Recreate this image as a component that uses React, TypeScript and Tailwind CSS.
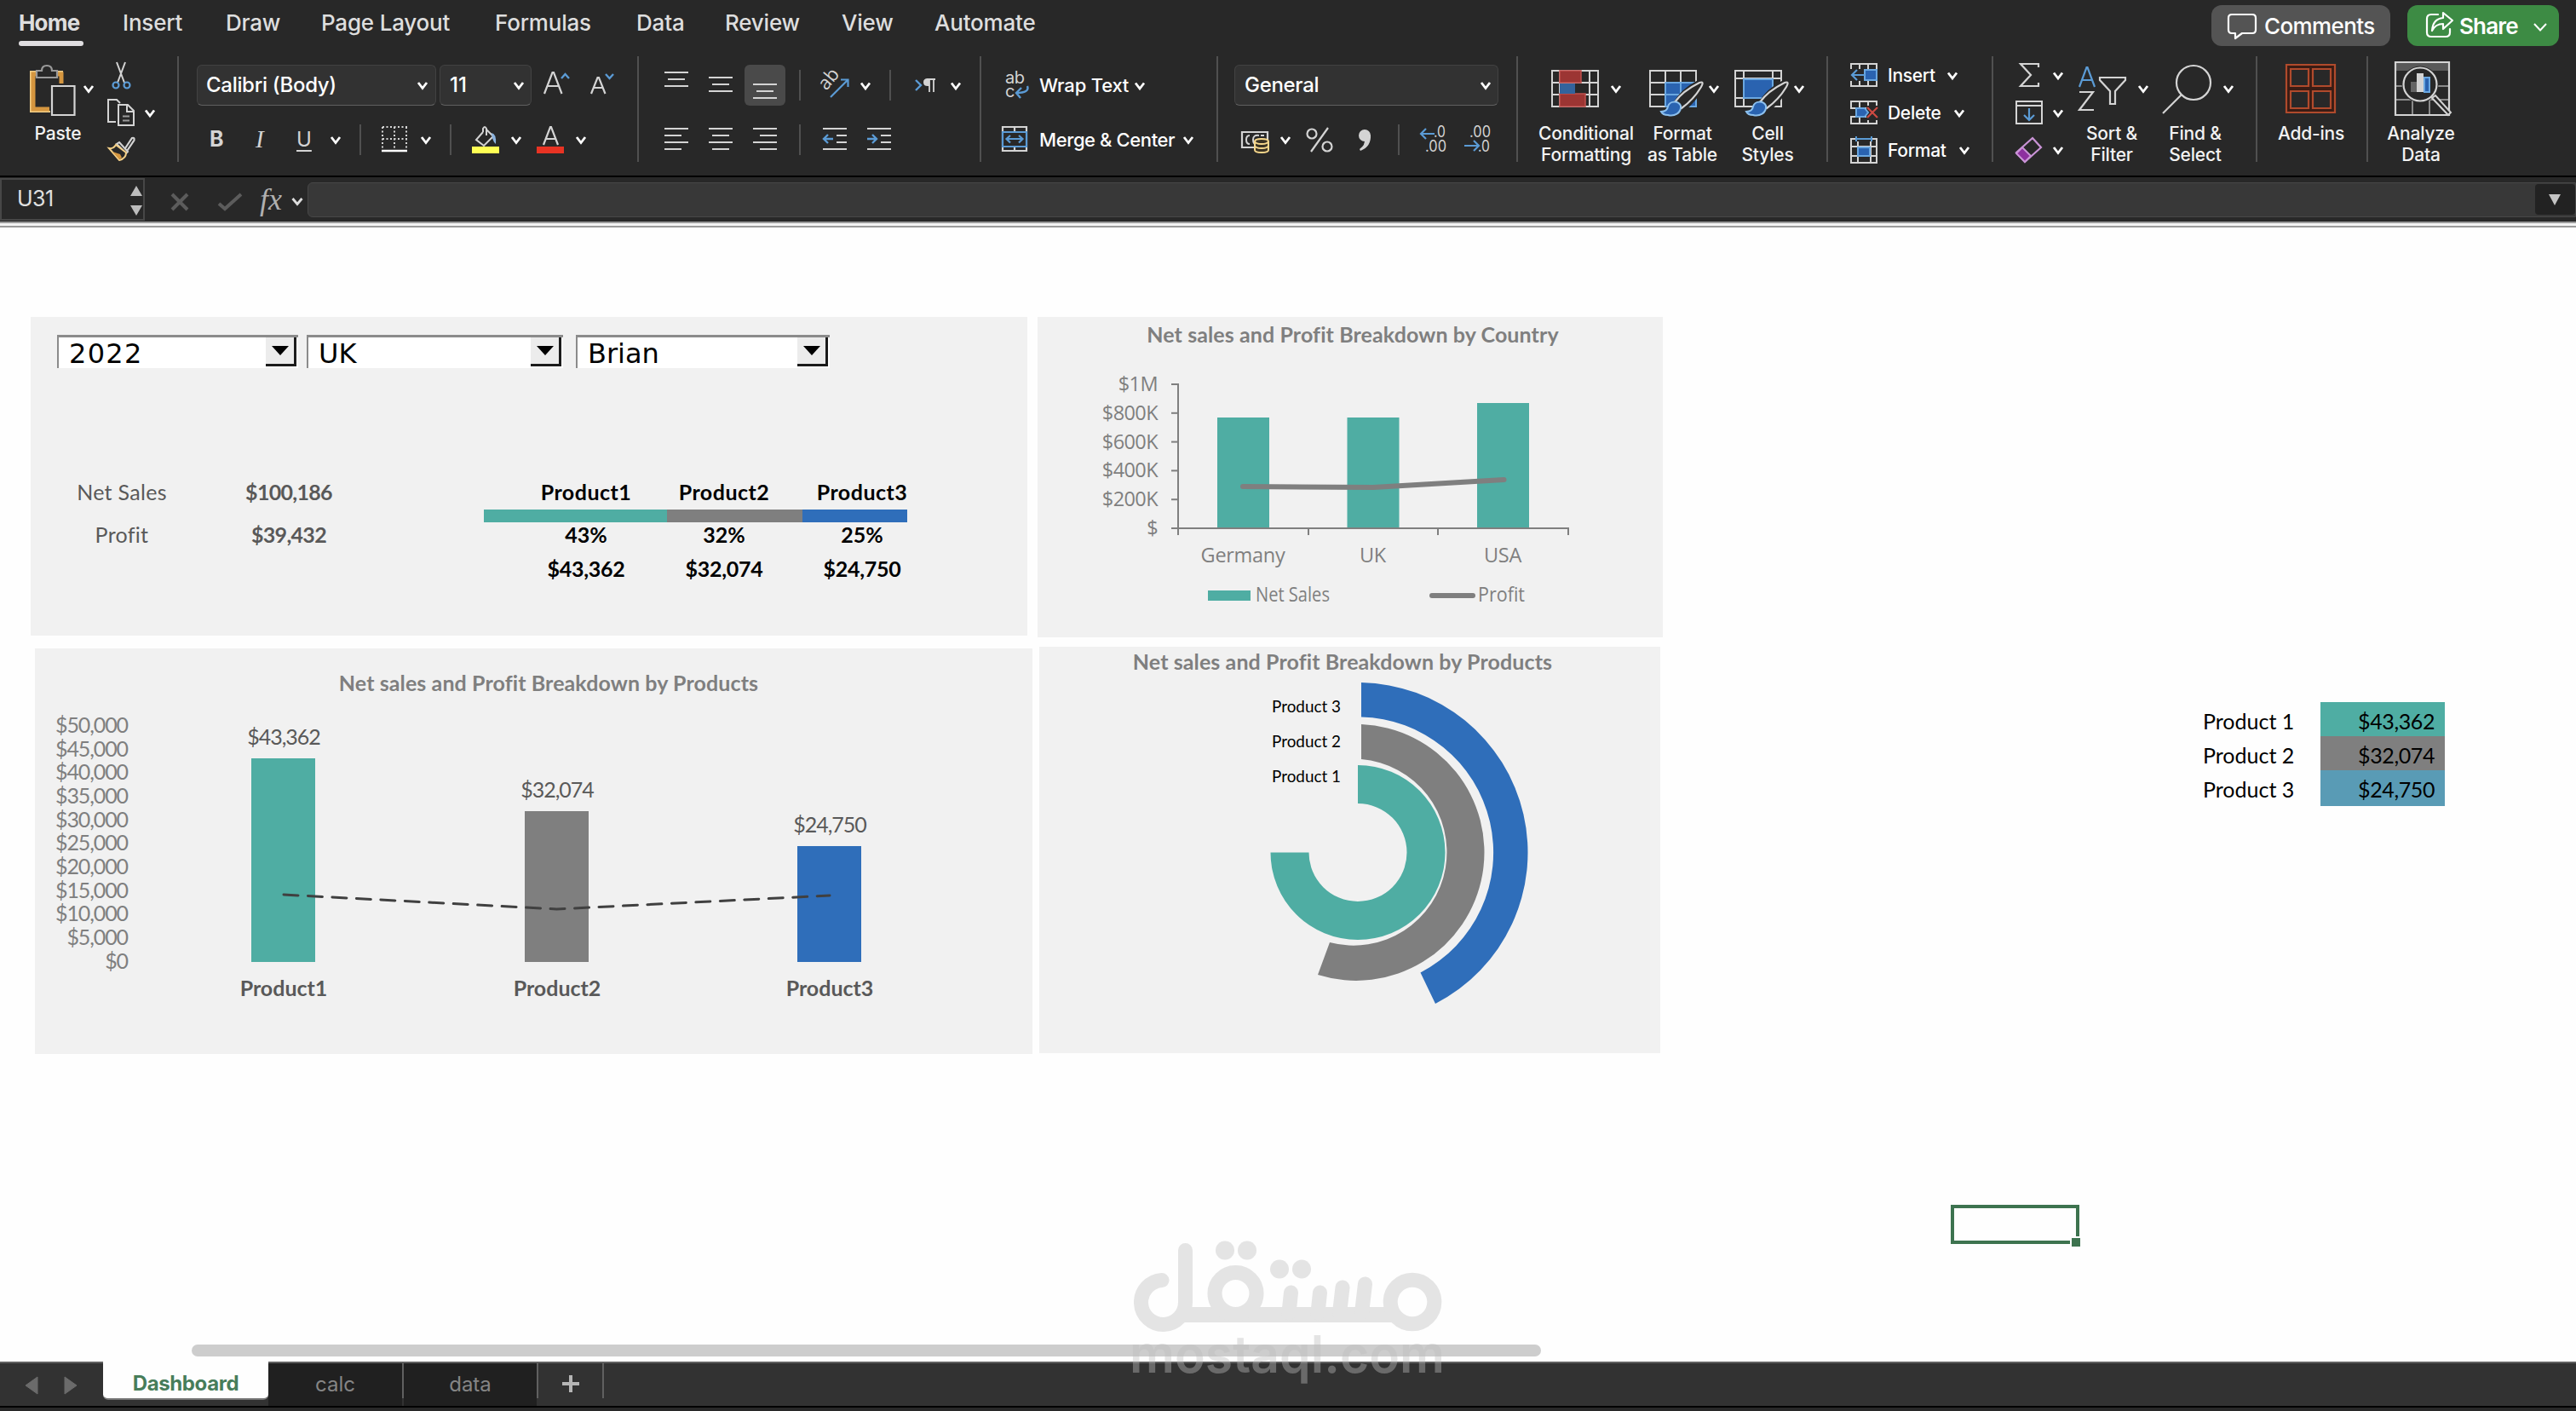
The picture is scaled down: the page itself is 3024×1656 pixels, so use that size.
import React from 'react';

const GREY = '#d4d4d4';
const BLUE = '#5b9bd5';
const TEAL = '#4fada3';
const MID = '#7f7f7f';
const ROYAL = '#2f6eba';

const GOTHIC = 'Lato, sans-serif';
const SEGOE = '"Open Sans", sans-serif';

type ArtProps = {
  x: number;
  w: number;
  y?: number;
  h?: number;
  children?: React.ReactNode;
};

// Every drawing in the ribbon shares one coordinate space, (x, y) is its top left corner.
function Art({ x, w, y = 76, h = 48, children }: ArtProps) {
  return (
    <svg width={w} height={h} viewBox={`${x} ${y} ${w} ${h}`} fill="none" className="shrink-0 overflow-visible">
      {children}
    </svg>
  );
}

function Chev({ cx, cy }: { cx: number; cy: number }) {
  return <path d={`M${cx - 5} ${cy - 3.5}l5 6.5 5-6.5`} stroke="#fff" strokeWidth="2.8" />;
}

function Rule({ x, y = 82 }: { x: number; y?: number }) {
  return <path d={`M${x} ${y}v36`} stroke="#505050" strokeWidth="2" />;
}

function Bars({ rows, stroke = GREY }: { rows: [number, number, number][]; stroke?: string }) {
  return <path d={rows.map(([x, y, w]) => `M${x} ${y}h${w}`).join('')} stroke={stroke} strokeWidth="2.2" />;
}

function Brush({ x }: { x: number }) {
  return (
    <g>
      <path d={`M${x + 18} 121q8-14 27-24q6-2 2 5q-9 15-21 25z`} fill="#282828" stroke="#282828" strokeWidth="7" />
      <path d={`M${x + 16} 120q9-13 29-23q6-2 2 5q-9 15-23 25z`} fill="#282828" stroke={GREY} strokeWidth="2.2" />
      <path
        d={`M${x} 131q7 0 8-6c2-7 12-7 15-1 1 9-8 13-15 11q-6 0-8-4z`}
        fill="#2a63b0"
        stroke="#8cc0ee"
        strokeWidth="2"
      />
    </g>
  );
}

function Group({ className, children }: { className: string; children: React.ReactNode }) {
  return <div className={`h-[124px] shrink-0 border-[#505050] ${className}`}>{children}</div>;
}

function BigButton({ className, lines, children }: { className: string; lines: string[]; children: React.ReactNode }) {
  return (
    <div className={`flex shrink-0 flex-col ${className}`}>
      {children}
      <div className="text-center text-[21px] leading-[25px] font-medium tracking-[-0.2px] whitespace-nowrap text-[#f2f2f2]">
        {lines.map((line) => (
          <div key={line}>{line}</div>
        ))}
      </div>
    </div>
  );
}

const tabs = [
  { label: 'Home', className: 'w-[122px] font-bold' },
  { label: 'Insert', className: 'w-[121px] font-medium' },
  { label: 'Draw', className: 'w-[112px] font-medium' },
  { label: 'Page Layout', className: 'w-[204px] font-medium' },
  { label: 'Formulas', className: 'w-[166px] font-medium' },
  { label: 'Data', className: 'w-[104px] font-medium' },
  { label: 'Review', className: 'w-[137px] font-medium' },
  { label: 'View', className: 'w-[109px] font-medium' },
  { label: 'Automate', className: 'w-[140px] font-medium' },
];

function TabBar() {
  return (
    <div className="flex h-[66px] items-start">
      <div className="flex pt-[9px] pl-[22px]">
        {tabs.map((tab, i) => (
          <div
            key={tab.label}
            className={`text-[26px] leading-[36px] tracking-[-0.2px] whitespace-nowrap text-[#dedede] ${tab.className}`}
          >
            {i === 0 ? <span className="tracking-[-0.8px]">{tab.label}</span> : tab.label}
            {i === 0 && <div className="mt-[3px] h-[6px] w-[76px] rounded-full bg-[#e0dee1]" />}
          </div>
        ))}
      </div>
      <div className="mt-[6px] ml-auto flex h-[48px] w-[210px] items-center rounded-xl bg-[#545454]">
        <Art x={2596} y={6} w={62}>
          <path
            d="M2620 17h24q4 0 4 4v14q0 4-4 4h-12l-8 6v-6h-4q-4 0-4-4v-14q0-4 4-4z"
            stroke="#fff"
            strokeWidth="2.2"
            strokeLinejoin="round"
          />
        </Art>
        <span className="text-[26px] font-medium tracking-[-0.6px] text-white">Comments</span>
      </div>
      <div className="mt-[6px] mr-[20px] ml-[20px] flex h-[48px] w-[178px] items-center rounded-xl bg-[#3d8b44]">
        <Art x={2826} y={6} w={61}>
          <path
            d="M2862 17h-8q-5 0-5 5v16q0 5 5 5h17q5 0 5-5v-4"
            stroke="#fff"
            strokeWidth="2.2"
            strokeLinecap="round"
          />
          <path
            d="M2868 15l11 9-11 10v-6q-9 0-13 8 1-14 13-15z"
            stroke="#fff"
            strokeWidth="2.2"
            strokeLinejoin="round"
          />
        </Art>
        <span className="w-[82px] text-[26px] font-semibold tracking-[-0.8px] text-white">Share</span>
        <Art x={2969} y={6} w={30}>
          <path d="M2975 28l7 7.500 7-7.500" stroke="#fff" strokeWidth="2" />
        </Art>
      </div>
    </div>
  );
}

function ClipboardGroup() {
  return (
    <Group className="flex w-[210px] border-r-2">
      <BigButton className="w-[118px] pl-[18px]" lines={['Paste']}>
        <Art x={18} y={66} w={100} h={78}>
          <path d="M45 84h-9v47h23M64 84h9v13" stroke="#f3cf87" strokeWidth="2" />
          <path d="M43 87h-4v41h19M66 87h6v11" stroke="#d5963f" strokeWidth="5" />
          <path d="M43 91v-8h6q0-6 6-6t6 6h6v8z" fill="#282828" stroke="#9a9a9a" strokeWidth="2.2" />
          <path d="M61 101h26.500v34H61z" fill="#282828" stroke={GREY} strokeWidth="2.200" />
          <Chev cx={104} cy={104.500} />
        </Art>
      </BigButton>
      <Art x={118} y={66} w={86} h={128}>
        <path d="M137 73l9 24M147 73l-9 24" stroke={GREY} strokeWidth="2" />
        <circle cx="136" cy="100" r="3.500" stroke={BLUE} strokeWidth="2.200" />
        <circle cx="149" cy="100" r="3.500" stroke={BLUE} strokeWidth="2.200" />
        <path d="M136 143h-9v-26h10l4 4" stroke={GREY} strokeWidth="2" />
        <path d="M139 123h11l7 7v17h-18zM149 123v8h8" stroke={GREY} strokeWidth="2" />
        <path d="M144 136.500h8M144 141.500h8" stroke="#999" strokeWidth="1.800" />
        <Chev cx={176} cy={133} />
        <path d="M147 174l8-12q3-1 2.500 2.500l-8 12" stroke={GREY} strokeWidth="2.200" />
        <path d="M140 167l10 11-2 2-11-11z" stroke={GREY} strokeWidth="2" />
        <path d="M136 170q-3 5-8 4l12 14q8-2 8-9z" fill="#282828" stroke="#f3cf87" strokeWidth="2" />
        <path d="M132 178l9 3 2 4-3 2z" fill="#d5963f" />
      </Art>
    </Group>
  );
}

const selectBox =
  'flex h-[48px] shrink-0 items-center rounded-md border border-[#424242] border-b-[#606060] bg-[#323232] text-[24px] font-medium text-white';

function FontGroup() {
  return (
    <Group className="w-[540px] border-r-2 pt-[10px] pl-[21px]">
      <div className="flex h-[48px] items-center">
        <div className={`${selectBox} w-[281px] pl-[10px] tracking-[-0.3px]`}>
          <span className="w-[242px] whitespace-nowrap">Calibri (Body)</span>
          <Art x={485} w={24} y={88} h={24}>
            <Chev cx={497} cy={100.500} />
          </Art>
        </div>
        <div className={`${selectBox} ml-[4px] w-[108px] pl-[11px]`}>
          <span className="w-[69px]">11</span>
          <Art x={597} w={24} y={88} h={24}>
            <Chev cx={609} cy={100.500} />
          </Art>
        </div>
        <Art x={624} w={110}>
          <path d="M639 110l9.500-25h1.500l9.500 25M643 101h13" stroke={GREY} strokeWidth="2.200" />
          <path d="M659 92l4.500-5 4.500 5" stroke={BLUE} strokeWidth="2.400" />
          <path d="M694 110l7.500-19h1.500l7.500 19M697 103h11" stroke={GREY} strokeWidth="2.200" />
          <path d="M711 87l4.500 5 4.500-5" stroke={BLUE} strokeWidth="2.400" />
        </Art>
      </div>
      <div className="mt-[22px] flex h-[36px] items-center">
        <span className="w-[49px] pl-[15px] text-[25px] font-bold text-[#d4d4d4]">B</span>
        <span className="w-[50px] pl-[20px] font-['Liberation_Serif',serif] text-[29px] text-[#d4d4d4] italic">I</span>
        <span className="w-[45px] pl-[18px] text-[24px] text-[#d4d4d4] underline decoration-2 underline-offset-4">U</span>
        <Art x={375} y={146} w={352} h={36}>
          <Chev cx={394} cy={164.500} />
          <Rule x={423} y={146} />
          <path d="M449 149h29M449 149v25M477 149v25M463 149v25M449 163h29" stroke={GREY} strokeWidth="2" strokeDasharray="2 2.500" />
          <path d="M448 177h30" stroke="#fff" strokeWidth="2.500" />
          <Chev cx={500} cy={164.500} />
          <Rule x={529} y={146} />
          <path d="M567 155l-8 9 9 7 11-11-8-8M567 155v-4q2-4 4 0v8" stroke={GREY} strokeWidth="2" />
          <path d="M577 156q6 1 5 13-4-3-5-13z" fill="#8cb4e0" />
          <path d="M554 172h32v8h-32z" fill="#ffff54" />
          <Chev cx={606} cy={164.500} />
          <path d="M638 170l8-21h1l8 21M641 163h11" stroke={GREY} strokeWidth="2.200" />
          <path d="M630 172h32v8h-32z" fill="#e83323" />
          <Chev cx={682} cy={164.500} />
        </Art>
      </div>
    </Group>
  );
}

function AlignGroup() {
  return (
    <Group className="w-[402px] border-r-2 pt-[10px] pl-[20px]">
      <div className="flex h-[48px] items-center">
        <Art x={770} w={104}>
          <Bars rows={[[780, 85, 28], [784, 93, 20], [780, 101, 28], [832, 91, 28], [836, 99, 20], [832, 107, 28]]} />
        </Art>
        <div className="h-[48px] w-[48px] rounded-md bg-[#4a4a4a]">
          <Art x={874} w={48}>
            <Bars rows={[[884, 99, 28], [888, 107, 20], [884, 115, 28]]} />
          </Art>
        </div>
        <Art x={922} w={220}>
          <Rule x={939} />
          <text
            x="970"
            y="107"
            transform="rotate(-50 970 107)"
            fontFamily="Open Sans, sans-serif"
            fontSize="22"
            fill={GREY}
          >
            ab
          </text>
          <path d="M975 114l20-20M987 93.500h8.500v8.500" stroke={BLUE} strokeWidth="2.200" />
          <Chev cx={1016} cy={101} />
          <Rule x={1045} />
          <path d="M1075 94l6 6-6 6" stroke={BLUE} strokeWidth="2.400" />
          <path d="M1091 93v15M1096 93v15M1088 93h10" stroke={GREY} strokeWidth="1.800" />
          <path d="M1091 92h-2q-5 0-5 4.500t5 4.500h2z" fill={GREY} />
          <Chev cx={1122} cy={101} />
        </Art>
      </div>
      <div className="mt-[22px] flex h-[36px] items-center">
        <Art x={770} y={146} w={300} h={36}>
          <Bars rows={[[780, 151, 28], [780, 159, 20], [780, 167, 28], [780, 175, 20]]} />
          <Bars rows={[[832, 151, 28], [836, 159, 20], [832, 167, 28], [836, 175, 20]]} />
          <Bars rows={[[884, 151, 28], [892, 159, 20], [884, 167, 28], [892, 175, 20]]} />
          <Rule x={939} y={146} />
          <Bars rows={[[966, 151, 28], [982, 159, 12], [982, 167, 12], [966, 175, 28]]} />
          <path d="M978 163h-11M972 158l-5 5 5 5" stroke={BLUE} strokeWidth="2.400" />
          <Bars rows={[[1018, 151, 28], [1034, 159, 12], [1034, 167, 12], [1018, 175, 28]]} />
          <path d="M1018 163h11M1024 158l5 5-5 5" stroke={BLUE} strokeWidth="2.400" />
        </Art>
      </div>
    </Group>
  );
}

function WrapGroup() {
  return (
    <Group className="w-[278px] border-r-2 pt-[10px] pl-[18px] text-[22px] font-medium tracking-[-0.4px] whitespace-nowrap text-white">
      <div className="flex h-[48px] items-center">
        <Art x={1170} w={50}>
          <g fill={GREY} fontFamily="Inter, sans-serif" fontSize="20" fontWeight="400">
            <text x="1180" y="98">ab</text>
            <text x="1180" y="114">c</text>
          </g>
          <path d="M1206 101q3 8-13 8M1199 103l-6 6 5 6" stroke={BLUE} strokeWidth="2.400" />
        </Art>
        <span className="w-[106px] tracking-[-0.2px]">Wrap Text</span>
        <Art x={1326} w={24}>
          <Chev cx={1338} cy={101} />
        </Art>
      </div>
      <div className="mt-[22px] flex h-[36px] items-center">
        <Art x={1170} y={146} w={50} h={36}>
          <path d="M1177 149h28v28h-28zM1191 149v6M1191 171v6" stroke={GREY} strokeWidth="2.200" />
          <path d="M1177 155h28v17h-28z" fill="#282828" stroke={BLUE} strokeWidth="2.200" />
          <path d="M1182 163h18M1186 159l-4.500 4 4.500 4.500M1196 159l4.500 4-4.500 4.500" stroke={BLUE} strokeWidth="2.200" />
        </Art>
        <span className="w-[163px]">Merge &amp; Center</span>
        <Art x={1383} y={146} w={24} h={36}>
          <Chev cx={1395} cy={164.500} />
        </Art>
      </div>
    </Group>
  );
}

function NumberGroup() {
  return (
    <Group className="w-[352px] border-r-2 pt-[10px] pl-[19px]">
      <div className={`${selectBox} w-[310px] pl-[11px] tracking-[-0.3px]`}>
        <span className="w-[271px]">General</span>
        <Art x={1732} w={24} y={88} h={24}>
          <Chev cx={1744} cy={100.500} />
        </Art>
      </div>
      <div className="mt-[22px] flex h-[36px] items-center">
        <Art x={1449} y={146} w={310} h={36}>
          <path d="M1458 155h30v18h-30z" stroke={GREY} strokeWidth="2.200" />
          <path d="M1467 159q-4 0-4 5t4 5M1478 159q-7-1-7 5t5 5M1480 159h4" stroke={GREY} strokeWidth="2" />
          <path d="M1473 166q0-3 8-3t8 3v10q0 3-8 3t-8-3z" fill="#3a3324" stroke="#f7d88c" strokeWidth="2" />
          <path d="M1473 166q1 3 8 3t8-3M1473 171q1 3 8 3t8-3" stroke="#f7d88c" strokeWidth="2" />
          <Chev cx={1509} cy={164.500} />
          <circle cx="1540" cy="157" r="5.500" stroke={GREY} strokeWidth="2.200" />
          <circle cx="1558" cy="172" r="5.500" stroke={GREY} strokeWidth="2.200" />
          <path d="M1559 150l-20 28" stroke={GREY} strokeWidth="2.200" />
          <circle cx="1602" cy="159" r="7" fill={GREY} />
          <path d="M1609 158q1 14-12 19l-1-2q7-5 6-12z" fill={GREY} />
          <Rule x={1642} y={146} />
          <g fill={GREY} fontFamily="Inter, sans-serif" fontSize="18">
            <text x="1683" y="161" textLength="14" lengthAdjust="spacingAndGlyphs">.0</text>
            <text x="1673" y="178" textLength="25" lengthAdjust="spacingAndGlyphs">.00</text>
            <text x="1725" y="161" textLength="25" lengthAdjust="spacingAndGlyphs">.00</text>
            <text x="1735" y="178" textLength="14" lengthAdjust="spacingAndGlyphs">.0</text>
          </g>
          <path d="M1684 157h-16M1674 151l-6 6 6 6" stroke={BLUE} strokeWidth="2.200" />
          <path d="M1719 171h16M1730 165l6 6-6 6" stroke={BLUE} strokeWidth="2.200" />
        </Art>
      </div>
    </Group>
  );
}

function StylesGroup() {
  return (
    <Group className="flex w-[364px] border-r-2 pl-[19px]">
      <BigButton className="w-[122px]" lines={['Conditional', 'Formatting']}>
        <Art x={1801} y={66} w={122} h={78}>
          <path d="M1822 83h54v42h-54zM1822 97h54M1822 111h54M1831 83v42M1866 83v42" stroke={GREY} strokeWidth="2" />
          <path d="M1831 83h25v14h-25zM1831 110h30v15h-30z" fill="#9c3533" stroke="#c0504d" strokeWidth="1.500" />
          <path d="M1831 98h18v12h-18z" fill="#33639c" />
          <Chev cx={1897} cy={104.500} />
        </Art>
      </BigButton>
      <BigButton className="w-[104px]" lines={['Format', 'as Table']}>
        <Art x={1923} y={66} w={104} h={78}>
          <path d="M1955 97h36v28h-36z" fill="#2a63b0" />
          <path d="M1937 83h54v42h-54zM1937 97h54M1937 111h54M1955 83v42M1973 83v42" stroke={GREY} strokeWidth="2" />
          <path d="M1955 97h36M1955 111h36M1955 97v28M1973 97v28M1955 125h36v-14" stroke="#6aa7e0" strokeWidth="2" />
          <Brush x={1950} />
          <Chev cx={2012} cy={104.500} />
        </Art>
      </BigButton>
      <BigButton className="-ml-[2px] w-[100px]" lines={['Cell', 'Styles']}>
        <Art x={2025} y={66} w={100} h={78}>
          <path d="M2037 83h54v42h-54zM2047 83v42M2081 83v42M2037 92h54M2037 115h54" stroke={GREY} strokeWidth="2" />
          <path d="M2047 93h34v22h-34z" fill="#2a63b0" stroke="#6aa7e0" strokeWidth="2" />
          <Brush x={2050} />
          <Chev cx={2112} cy={104.500} />
        </Art>
      </BigButton>
    </Group>
  );
}

function CellsGroup() {
  const label = 'pt-[2px] text-[21px] font-medium tracking-[-0.3px] text-white';
  return (
    <Group className="w-[194px] border-r-2 pl-[14px]">
      <div className="flex h-[44px] items-center">
        <Art x={2160} y={66} w={56} h={44}>
          <path d="M2173 75h30v26h-30zM2173 83h30M2173 93h30M2183 75v26M2193 75v26" stroke={GREY} strokeWidth="2" />
          <path d="M2172 81h18v14h-18z" fill="#282828" />
          <path d="M2189 82h14v12h-14z" fill="#2a63b0" stroke="#6aa7e0" strokeWidth="2" />
          <path d="M2189 88h-15M2180 82l-6 6 6 6" stroke={BLUE} strokeWidth="2.200" />
        </Art>
        <span className={`${label} w-[64px]`}>Insert</span>
        <Art x={2280} y={66} w={24} h={44}>
          <Chev cx={2292} cy={89} />
        </Art>
      </div>
      <div className="flex h-[44px] items-center">
        <Art x={2160} y={110} w={56} h={44}>
          <path d="M2173 119h30v26h-30zM2173 127h30M2173 137h30M2183 119v26M2193 119v26" stroke={GREY} strokeWidth="2" />
          <path d="M2191 124h14v17h-14zM2171 128h8v8h-8z" fill="#282828" />
          <path d="M2179 127h10l4 5-4 5h-10z" fill="#2a63b0" stroke="#6aa7e0" strokeWidth="2" />
          <path d="M2192 126l12 12M2204 126l-12 12" stroke="#cf4a43" strokeWidth="2.200" />
        </Art>
        <span className={`${label} w-[72px]`}>Delete</span>
        <Art x={2288} y={110} w={24} h={44}>
          <Chev cx={2300} cy={133} />
        </Art>
      </div>
      <div className="flex h-[44px] items-center">
        <Art x={2160} y={154} w={56} h={44}>
          <path d="M2178 163h-5v28h30v-28h-5M2173 172h30M2173 183h30M2181 166v25M2196 166v25" stroke={GREY} strokeWidth="2" />
          <path d="M2181 173h14v10h-14z" fill="#2a63b0" stroke="#6aa7e0" strokeWidth="2" />
          <path d="M2179 163h18M2179 160v6M2197 160v6" stroke={BLUE} strokeWidth="2" />
        </Art>
        <span className={`${label} w-[78px]`}>Format</span>
        <Art x={2294} y={154} w={24} h={44}>
          <Chev cx={2306} cy={176.500} />
        </Art>
      </div>
    </Group>
  );
}

function EditGroup() {
  return (
    <Group className="flex w-[310px] border-r-2 pl-[14px]">
      <Art x={2354} y={66} w={74} h={128}>
        <path d="M2393 79v-4h-21l12 13-12 13h21v-4" stroke={GREY} strokeWidth="2.200" />
        <Chev cx={2416} cy={89} />
        <path d="M2367 119h30v26h-30zM2367 124h30" stroke={GREY} strokeWidth="2" />
        <path d="M2382 127v14M2376 135l6 6 6-6" stroke={BLUE} strokeWidth="2.200" />
        <Chev cx={2416} cy={133} />
        <path d="M2386 162l10 11-19 17-10-11z" stroke="#c993d6" strokeWidth="2.200" />
        <path d="M2374 173l10 10-7 7-10-10z" fill="#8d2f9f" stroke="#c993d6" strokeWidth="2" />
        <Chev cx={2416} cy={176.500} />
      </Art>
      <BigButton className="w-[102px]" lines={['Sort &', 'Filter']}>
        <Art x={2428} y={66} w={102} h={78}>
          <path d="M2441 102l8.500-23h1l8.500 23M2444 94h12" stroke={BLUE} strokeWidth="2.200" />
          <path d="M2441 108h16l-16 21h17" stroke={GREY} strokeWidth="2.200" />
          <path d="M2465 91h30v3l-12 13v15h-6v-15l-12-13z" stroke={GREY} strokeWidth="2.200" />
          <Chev cx={2516} cy={104.500} />
        </Art>
      </BigButton>
      <BigButton className="w-[94px]" lines={['Find &', 'Select']}>
        <Art x={2530} y={66} w={94} h={78}>
          <circle cx="2575" cy="97" r="20" stroke={GREY} strokeWidth="2.200" />
          <path d="M2561 111l-22 22" stroke={GREY} strokeWidth="2.200" />
          <Chev cx={2616} cy={104.500} />
        </Art>
      </BigButton>
    </Group>
  );
}

function AddinsGroup() {
  return (
    <>
      <Group className="flex w-[130px] border-r-2 pl-[10px]">
        <BigButton className="w-[106px]" lines={['Add-ins']}>
          <Art x={2660} y={66} w={106} h={78}>
            <path d="M2684 76h57v56h-57z" fill="#3a1c14" stroke="#b04a2c" strokeWidth="2.200" />
            <path
              d="M2689 81h21v20h-21zM2715 81h21v20h-21zM2689 107h21v20h-21zM2715 107h21v20h-21z"
              fill="#282828"
              stroke="#b04a2c"
              strokeWidth="2.200"
            />
          </Art>
        </BigButton>
      </Group>
      <Group className="flex w-[130px]">
        <BigButton className="w-[124px]" lines={['Analyze', 'Data']}>
          <Art x={2780} y={66} w={124} h={78}>
            <path d="M2812 73h63v10h-63z" fill="#595959" />
            <path d="M2812 101h63M2812 117h63M2832 117v18M2852 117v18" stroke="#8a8a8a" strokeWidth="2" />
            <path d="M2812 73h63v62h-63z" stroke={GREY} strokeWidth="2.200" />
            <circle cx="2841" cy="99" r="21.500" fill="#282828" />
            <circle cx="2841" cy="99" r="19.500" fill="#282828" stroke={GREY} strokeWidth="2.200" />
            <path d="M2855 115l19 20 3-3-18-20z" fill="#282828" stroke={GREY} strokeWidth="2" />
            <path d="M2830 96h7v12h-7z" fill="#666" />
            <path d="M2837 86h8v22h-8z" fill={GREY} />
            <path d="M2846 91h6v17h-6z" fill="#2a63b0" stroke="#6aa7e0" strokeWidth="2" />
          </Art>
        </BigButton>
      </Group>
    </>
  );
}

function FormulaBar() {
  return (
    <div className="flex h-[52px] items-center bg-[#282828]">
      <div className="flex h-[50px] w-[170px] shrink-0 items-center border-2 border-[#474747] pl-[18px]">
        <span className="w-[124px] text-[25px] tracking-[-0.5px] text-[#e0e0e0]">U31</span>
        <Art x={144} y={210} w={24} h={46}>
          <path d="M160 217l7 12h-14zM160 252l-7-12h14z" fill="#bdbdbd" />
        </Art>
      </div>
      <Art x={170} y={208} w={125} h={52}>
        <path d="M202 228l18 18M220 228l-18 18" stroke="#5c5c5c" strokeWidth="4" />
        <path d="M257 239l7 6 19-17" stroke="#5c5c5c" strokeWidth="4" />
      </Art>
      <span className="w-[41px] pl-[10px] font-['Liberation_Serif',serif] text-[36px] leading-[44px] text-[#b0b0b0] italic">fx</span>
      <Art x={336} y={208} w={25} h={52}>
        <path d="M343.500 233l5.500 6.500 5.500-6.500" stroke="#dedede" strokeWidth="2.800" />
      </Art>
      <div className="flex h-[41px] grow items-center justify-end rounded-l-md border border-[#474747] bg-[#383838]">
        <div className="flex h-[36px] w-[47px] items-center justify-center rounded-sm bg-[#222] pr-[2px]">
          <svg width="14" height="13" viewBox="0 0 14 13">
            <path d="M0 0h14L7 13z" fill="#c4c4c4" />
          </svg>
        </div>
      </div>
    </div>
  );
}

function ComboBox({ className, value }: { className: string; value: string }) {
  return (
    <div
      className={`flex h-[39px] justify-between border-t-3 border-l-2 border-t-[#8b8b8b] border-l-[#8b8b8b] bg-white font-['DejaVu_Sans',sans-serif] text-[32px] leading-[39px] text-black ${className}`}
    >
      <span className="pl-[12px]">{value}</span>
      <div className="mr-[2px] flex h-[34px] w-[36px] items-center justify-center border-r-3 border-b-3 border-[#1c1c1c] bg-[#ececec]">
        <svg width="20" height="11" viewBox="0 0 20 11">
          <path d="M0 0h20L10 11z" fill="#000" />
        </svg>
      </div>
    </div>
  );
}

const products = [
  { name: 'Product1', share: '43%', amount: '$43,362', bar: 'w-[215px] bg-[#4fada3]' },
  { name: 'Product2', share: '32%', amount: '$32,074', bar: 'w-[159px] bg-[#7f7f7f]' },
  { name: 'Product3', share: '25%', amount: '$24,750', bar: 'w-[123px] bg-[#2f6eba]' },
];

function SummaryPanel() {
  return (
    <div className="h-[374px] w-[1170px] bg-[#f1f1f1] font-[Lato,sans-serif] text-[25px] leading-[30px]">
      <div className="flex pt-[21px] pl-[31px]">
        <ComboBox className="w-[283px] tracking-[1.300px]" value="2022" />
        <ComboBox className="ml-[10px] w-[301px]" value="UK" />
        <ComboBox className="ml-[15px] w-[298px]" value="Brian" />
      </div>
      <div className="mt-[130px] flex text-center">
        <div className="ml-[37px] w-[140px] tracking-[0.3px] text-[#595959]">
          <div>Net Sales</div>
          <div className="mt-[20px]">Profit</div>
        </div>
        <div className="ml-[56px] w-[140px] font-bold tracking-[-0.7px] text-[#595959]">
          <div>$100,186</div>
          <div className="mt-[20px]">$39,432</div>
        </div>
        <div className="ml-[159px] w-[530px] font-bold text-black">
          <div className="flex pl-[39px] tracking-[0.5px]">
            {products.map((p) => (
              <div key={p.name} className="w-[162px]">{p.name}</div>
            ))}
          </div>
          <div className="mt-[6px] flex h-[15px]">
            {products.map((p) => (
              <div key={p.name} className={p.bar} />
            ))}
          </div>
          <div className="-mt-px flex pl-[39px]">
            {products.map((p) => (
              <div key={p.name} className="w-[162px]">{p.share}</div>
            ))}
          </div>
          <div className="mt-[10px] flex pl-[39px] tracking-[-0.3px]">
            {products.map((p) => (
              <div key={p.name} className="w-[162px]">{p.amount}</div>
            ))}
          </div>
        </div>
      </div>
    </div>
  );
}

function CountryPanel() {
  const scale = ['$1M', '$800K', '$600K', '$400K', '$200K', '$'];
  const bars = [
    { name: 'Germany', x: 1429, top: 490 },
    { name: 'UK', x: 1581.500, top: 490 },
    { name: 'USA', x: 1734, top: 473 },
  ];
  return (
    <div className="h-[376px] w-[734px] bg-[#f1f1f1]">
      <h2 className="h-[40px] pl-[6px] text-center font-[Lato,sans-serif] text-[25px] leading-[40px] font-bold tracking-[0.1px] text-[#7f7f7f]">
        Net sales and Profit Breakdown by Country
      </h2>
      <svg width="734" height="336" viewBox="1218 412 734 336" fontFamily={SEGOE} fontSize="23.500" fill={MID}>
        {scale.map((label, i) => (
          <g key={label}>
            <text x="1359" y={459 + i * 33.800} textAnchor="end" letterSpacing="-0.6">{label}</text>
            <path d={`M1375 ${451 + i * 33.800}h8`} stroke={MID} strokeWidth="2" />
          </g>
        ))}
        {bars.map((b) => (
          <g key={b.name}>
            <rect x={b.x} y={b.top} width="61" height={620 - b.top} fill={TEAL} />
            <text x={b.x + 30} y="660" textAnchor="middle" letterSpacing="-0.300">{b.name}</text>
          </g>
        ))}
        <path d="M1383 450v178M1383 620h459M1536 620v8M1688 620v8M1841 620v8" fill="none" stroke={MID} strokeWidth="2" />
        <path d="M1459 571l153 1 153.500-9" fill="none" stroke={MID} strokeWidth="6" strokeLinecap="round" strokeLinejoin="round" />
        <rect x="1418" y="693" width="50" height="12" fill={TEAL} />
        <text x="1474" y="706" textLength="87" lengthAdjust="spacingAndGlyphs">Net Sales</text>
        <path d="M1681 699h48" stroke={MID} strokeWidth="6" strokeLinecap="round" />
        <text x="1735" y="706" textLength="55" lengthAdjust="spacingAndGlyphs">Profit</text>
      </svg>
    </div>
  );
}

function ProductPanel() {
  const bars = [
    { name: 'Product1', value: '$43,362', x: 295, top: 890, fill: TEAL },
    { name: 'Product2', value: '$32,074', x: 616, top: 952, fill: MID },
    { name: 'Product3', value: '$24,750', x: 936, top: 993, fill: ROYAL },
  ];
  const scale = [50, 45, 40, 35, 30, 25, 20, 15, 10, 5, 0];
  return (
    <div className="h-[476px] w-[1171px] bg-[#f1f1f1]">
      <h2 className="h-[80px] pl-[35px] text-center font-[Lato,sans-serif] text-[25px] leading-[80px] font-bold tracking-[0.1px] text-[#7f7f7f]">
        Net sales and Profit Breakdown by Products
      </h2>
      <svg width="1171" height="396" viewBox="41 841 1171 396" fontFamily={GOTHIC} fontSize="25" className="overflow-visible">
        {scale.map((n, i) => (
          <text key={n} x="150" y={860 + i * 27.650} textAnchor="end" fill={MID} letterSpacing="-1.100">
            {n ? `$${n},000` : '$0'}
          </text>
        ))}
        {bars.map((b) => (
          <g key={b.name} textAnchor="middle" fill="#595959">
            <rect x={b.x} y={b.top} width="75" height={1129 - b.top} fill={b.fill} />
            <text x={b.x + 38} y={b.top - 16} letterSpacing="-1">{b.value}</text>
            <text x={b.x + 38} y="1169" fontWeight="700">{b.name}</text>
          </g>
        ))}
        <path
          d="M333 1050l320.500 17 320.500-16"
          fill="none"
          stroke="#404040"
          strokeWidth="3"
          strokeDasharray="17 11.500"
          strokeLinecap="round"
        />
      </svg>
    </div>
  );
}

function RadialPanel() {
  return (
    <div className="h-[477px] w-[729px] bg-[#f1f1f1]">
      <h2 className="h-[36px] pr-[17px] text-center font-[Lato,sans-serif] text-[25px] leading-[34px] font-bold tracking-[0.1px] text-[#7f7f7f]">
        Net sales and Profit Breakdown by Products
      </h2>
      <svg width="729" height="441" viewBox="1220 795 729 441">
        <path d="M1598 801A199.500 199.500 0 0 1 1685 1178L1667.500 1141.500A159 159 0 0 0 1598 841.500z" fill={ROYAL} />
        <path d="M1598 850A150.500 150.500 0 1 1 1547 1144L1561 1106A109.500 109.500 0 1 0 1598 891z" fill={MID} />
        <path d="M1594 898A102.500 102.500 0 1 1 1491.500 1000.500H1536.500A57.500 57.500 0 1 0 1594 943z" fill={TEAL} />
        {[3, 2, 1].map((n, i) => (
          <text
            key={n}
            x="1493"
            y={836 + i * 41}
            textLength="81"
            lengthAdjust="spacingAndGlyphs"
            fontFamily={GOTHIC}
            fontSize="19.500"
            fill="#000"
          >
            Product {n}
          </text>
        ))}
      </svg>
    </div>
  );
}

const cells = [
  { name: 'Product 1', value: '$43,362', className: 'h-[40px] bg-[#4fada3]' },
  { name: 'Product 2', value: '$32,074', className: 'h-[40px] bg-[#7f7f7f]' },
  { name: 'Product 3', value: '$24,750', className: 'h-[42px] bg-[#599bb5]' },
];

function Sheet() {
  return (
    <div className="relative flex h-[1331px] bg-[#fefefe] pt-[105px] pl-[36px]">
      <div className="w-[1182px]">
        <SummaryPanel />
        <div className="mt-[15px] ml-[5px]">
          <ProductPanel />
        </div>
      </div>
      <div className="w-[1072px]">
        <CountryPanel />
        <div className="mt-[11px] ml-[2px]">
          <RadialPanel />
        </div>
      </div>
      <div className="w-[700px] pt-[452px] font-[Lato,sans-serif] text-[25px] leading-[45px] text-black">
        {cells.map((cell) => (
          <div key={cell.name} className="flex pl-[296px]">
            <div className="h-[40px] w-[138px]">{cell.name}</div>
            <div className={`w-[146px] pr-[12px] text-right tracking-[-0.4px] ${cell.className}`}>{cell.value}</div>
          </div>
        ))}
        {/* selected cell */}
        <div className="mt-[468px] h-[46px] w-[151px] border-[4px] border-[#3d734f]">
          <div className="relative top-[33px] left-[136px] h-[12px] w-[12px] border-t-2 border-l-2 border-[#fefefe] bg-[#3d734f]" />
        </div>
      </div>
      <div className="absolute top-[1311px] left-[225px] h-[14px] w-[1584px] rounded-full bg-[#cdcdcd]" />
    </div>
  );
}

function SheetTabs() {
  return (
    <div className="flex h-[52px] bg-[#323232] text-[24px] leading-[52px] text-[#858585]">
      <div className="h-[52px] w-[121px] border-t-2 border-[#606060]">
        <Art x={0} y={1600} w={120} h={50}>
          <path d="M30 1626l14-10v20zM90 1626l-14-10v20z" fill="#6b6b6b" stroke="#6b6b6b" strokeLinejoin="round" />
        </Art>
      </div>
      <div className="h-[45px] w-[194px] rounded-b-md border-b-2 border-[#757575] bg-[#fefefe] text-center font-bold tracking-[-0.4px] text-[#477d5a]">
        Dashboard
      </div>
      <div className="flex h-[52px] grow border-t-2 border-[#606060] leading-[49px]">
        <div className="w-[157px] bg-[#202020] text-center">calc</div>
        <div className="h-[41px] w-[2px] bg-[#606060]" />
        <div className="w-[156px] bg-[#202020] text-center">data</div>
        <div className="h-[41px] w-[2px] bg-[#606060]" />
        <Art x={632} y={1600} w={75} h={50}>
          <path d="M670 1614v20M660 1624h20" stroke="#b5b5b5" strokeWidth="4" />
        </Art>
        <div className="h-[41px] w-[2px] bg-[#606060]" />
      </div>
    </div>
  );
}

function Watermark() {
  return (
    <div className="pointer-events-none absolute top-[1446px] left-[1320px] opacity-40">
      <svg width="390" height="190" viewBox="1320 1446 390 190" fill="none" stroke="#bebebe" strokeWidth="17" strokeLinecap="round">
        <path d="M1364 1502.500A26 26 0 1 0 1391.500 1528V1467.500" />
        <path d="M1391 1543H1640" strokeLinecap="butt" strokeWidth="18" />
        <circle cx="1450.500" cy="1518" r="24.500" />
        <path d="M1515.500 1517l-2.500 24M1549.500 1517l-2.500 24M1576 1511l-3.500 30M1602.500 1507l-4 34" />
        <circle cx="1658" cy="1528" r="25.800" />
        <g fill="#bebebe" stroke="none">
          <circle cx="1438" cy="1467.500" r="11" />
          <circle cx="1464" cy="1467.500" r="11" />
          <circle cx="1502" cy="1489.500" r="11" />
          <circle cx="1528" cy="1489.500" r="11" />
          <text x="1326" y="1611" textLength="370" lengthAdjust="spacingAndGlyphs" fontFamily="Inter, sans-serif" fontWeight="600" fontSize="60">
            mostaql.com
          </text>
        </g>
      </svg>
    </div>
  );
}

export default function App() {
  return (
    <div className="relative h-[1656px] w-[3024px] overflow-hidden bg-[#282828] font-[Inter,sans-serif]">
      <TabBar />
      <div className="flex h-[140px]">
        <ClipboardGroup />
        <FontGroup />
        <AlignGroup />
        <WrapGroup />
        <NumberGroup />
        <StylesGroup />
        <CellsGroup />
        <EditGroup />
        <AddinsGroup />
      </div>
      <div className="h-[2px] bg-black" />
      <FormulaBar />
      <div className="h-[7px] border-y-2 border-[#9c9c9c] bg-[#f4f4f4]" />
      <Sheet />
      <SheetTabs />
      <div className="h-[2px] bg-black" />
      <Watermark />
    </div>
  );
}
